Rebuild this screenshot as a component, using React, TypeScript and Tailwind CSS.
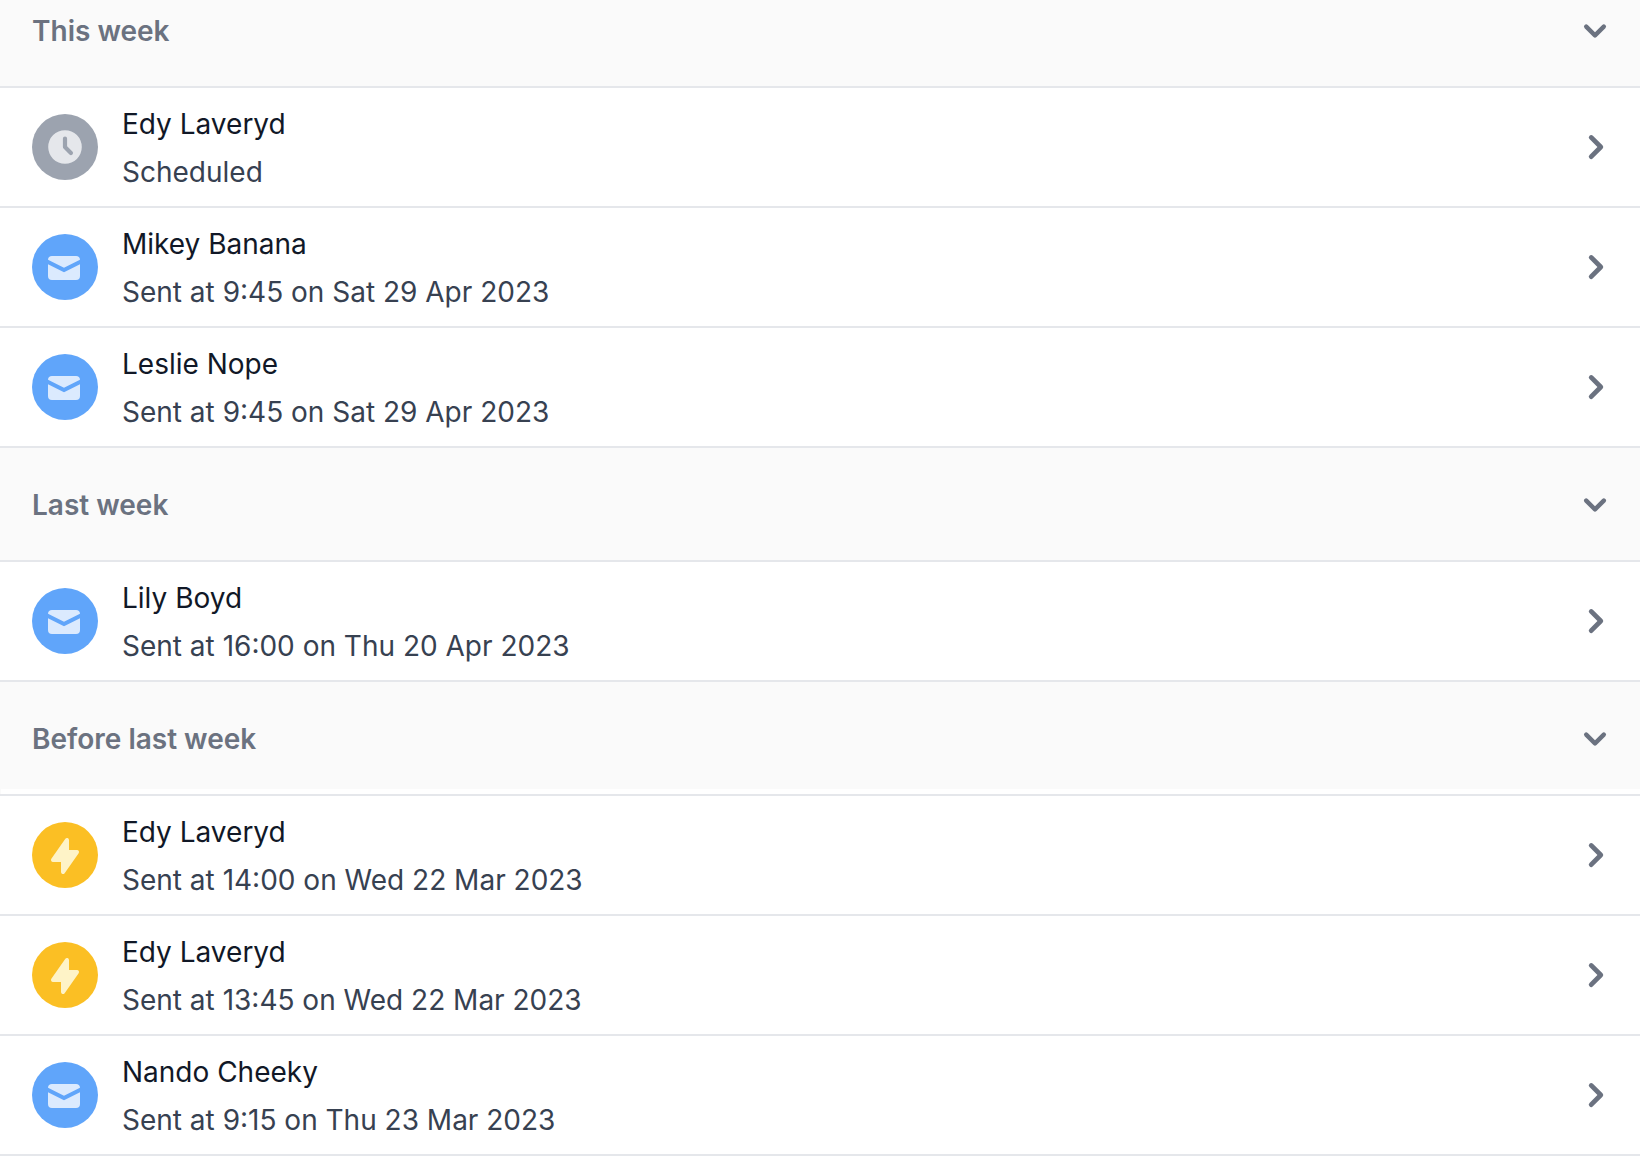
import { useState } from "react";

type Kind = "scheduled" | "mail" | "instant";

interface Entry {
  name: string;
  status: string;
  kind: Kind;
}

interface Group {
  title: string;
  entries: Entry[];
}

const groups: Group[] = [
  {
    title: "This week",
    entries: [
      { name: "Edy Laveryd", status: "Scheduled", kind: "scheduled" },
      { name: "Mikey Banana", status: "Sent at 9:45 on Sat 29 Apr 2023", kind: "mail" },
      { name: "Leslie Nope", status: "Sent at 9:45 on Sat 29 Apr 2023", kind: "mail" },
    ],
  },
  {
    title: "Last week",
    entries: [{ name: "Lily Boyd", status: "Sent at 16:00 on Thu 20 Apr 2023", kind: "mail" }],
  },
  {
    title: "Before last week",
    entries: [
      { name: "Edy Laveryd", status: "Sent at 14:00 on Wed 22 Mar 2023", kind: "instant" },
      { name: "Edy Laveryd", status: "Sent at 13:45 on Wed 22 Mar 2023", kind: "instant" },
      { name: "Nando Cheeky", status: "Sent at 9:15 on Thu 23 Mar 2023", kind: "mail" },
    ],
  },
];

const badgeBase = "flex size-[66px] shrink-0 items-center justify-center rounded-full";

function Badge({ kind }: { kind: Kind }) {
  if (kind === "scheduled") {
    return (
      <span className={`${badgeBase} bg-[#9ca3af] text-[#e5e7eb]`}>
        <svg viewBox="0 0 20 20" fill="currentColor" className="size-[42px]" aria-hidden="true">
          <path
            fillRule="evenodd"
            clipRule="evenodd"
            d="M10 18a8 8 0 100-16 8 8 0 000 16zm1-12a1 1 0 10-2 0v4a1 1 0 00.293.707l2.828 2.829a1 1 0 101.415-1.415L11 9.586V6z"
          />
        </svg>
      </span>
    );
  }
  if (kind === "mail") {
    return (
      <span className={`${badgeBase} bg-[#60a5fa] pt-0.5 pr-0.5 text-[#dbeafe]`}>
        <svg viewBox="0 0 20 20" fill="currentColor" className="size-10" aria-hidden="true">
          <path d="M2.003 5.884L10 9.882l7.997-3.998A2 2 0 0016 4H4a2 2 0 00-1.997 1.884z" />
          <path d="M18 8.118l-8 4-8-4V14a2 2 0 002 2h12a2 2 0 002-2V8.118z" />
        </svg>
      </span>
    );
  }
  return (
    <span className={`${badgeBase} bg-[#fbbf24] pt-0.5 text-[#fef3c7]`}>
      <svg viewBox="0 0 20 20" fill="currentColor" className="size-10" aria-hidden="true">
        <path
          fillRule="evenodd"
          clipRule="evenodd"
          d="M11.3 1.046A1 1 0 0112 2v5h4a1 1 0 01.82 1.573l-7 10A1 1 0 018 18v-5H4a1 1 0 01-.82-1.573l7-10a1 1 0 011.12-.38z"
        />
      </svg>
    </span>
  );
}

function Row({ entry }: { entry: Entry }) {
  return (
    <li className="border-b-2 border-[#e5e7eb]">
      <a href="#" className="flex items-center gap-6 py-2.5 pr-5 pl-8">
        <Badge kind={entry.kind} />
        <span className="min-w-0 flex-1 pt-0.5 text-[28px] leading-[48px]">
          <span className="block truncate text-[#111827]">{entry.name}</span>
          <span className="block truncate text-[#374151]">{entry.status}</span>
        </span>
        <svg viewBox="0 0 20 20" fill="currentColor" className="size-12 shrink-0 text-[#6b7280]" aria-hidden="true">
          <path
            fillRule="evenodd"
            clipRule="evenodd"
            d="M7.293 14.707a1 1 0 010-1.414L10.586 10 7.293 6.707a1 1 0 011.414-1.414l4 4a1 1 0 010 1.414l-4 4a1 1 0 01-1.414 0z"
          />
        </svg>
      </a>
    </li>
  );
}

function Section({ group, index }: { group: Group; index: number }) {
  const [open, setOpen] = useState(true);
  const isLast = index === groups.length - 1;
  return (
    <section>
      <h2 className={`border-b-2 border-[#e5e7eb] bg-[#fafafa] ${isLast ? "pb-0" : "pb-[5px]"}`}>
        <button
          type="button"
          aria-expanded={open}
          onClick={() => setOpen(!open)}
          className={`flex w-full cursor-pointer items-center justify-between pr-[23px] pb-[34px] pl-8 text-left text-[28px] leading-8 font-semibold text-[#6b7280] ${index === 0 ? "pt-[15px]" : "pt-[41px]"}`}
        >
          {group.title}
          <svg viewBox="0 0 20 20" fill="currentColor" className="-my-2 size-11 shrink-0" aria-hidden="true">
            <path
              fillRule="evenodd"
              clipRule="evenodd"
              d="M5.293 7.293a1 1 0 011.414 0L10 10.586l3.293-3.293a1 1 0 111.414 1.414l-4 4a1 1 0 01-1.414 0l-4-4a1 1 0 010-1.414z"
            />
          </svg>
        </button>
        {isLast && <div className="ml-px h-[5px] bg-white" />}
      </h2>
      {open && (
        <ul>
          {group.entries.map((entry, i) => (
            <Row key={i} entry={entry} />
          ))}
        </ul>
      )}
    </section>
  );
}

export default function App() {
  return (
    <main className="w-full bg-white font-['Inter',sans-serif]">
      {groups.map((group, i) => (
        <Section key={group.title} group={group} index={i} />
      ))}
    </main>
  );
}
